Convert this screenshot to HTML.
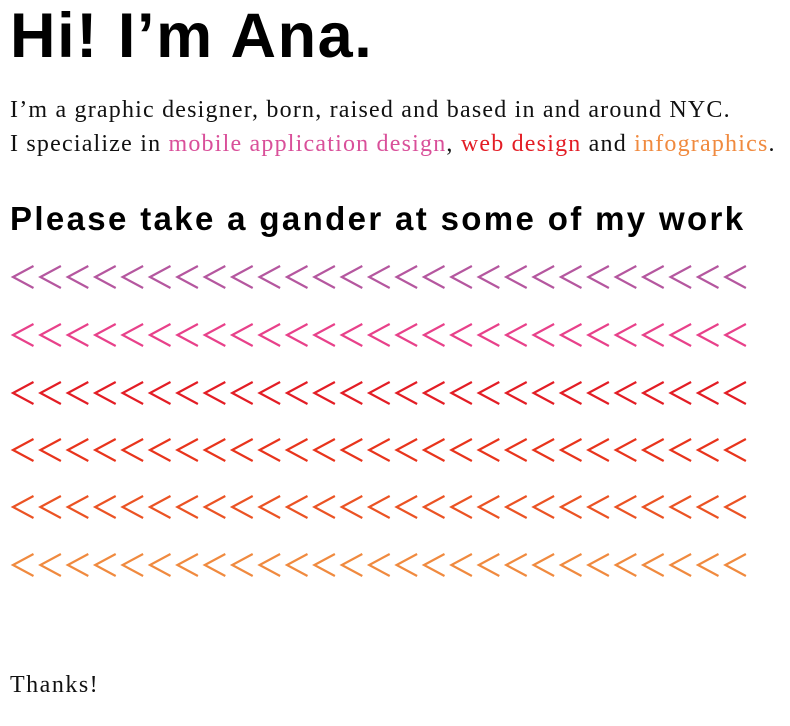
<!DOCTYPE html>
<html><head><meta charset="utf-8"><style>
body{margin:0;width:790px;height:726px;background:#fff;position:relative;overflow:hidden}
.a{position:absolute;left:10px;white-space:nowrap;margin:0}
h1{font:bold 63px/1 "Liberation Sans",sans-serif;top:5px;color:#000;letter-spacing:1.6px}
.p{font:24px/34px "Liberation Serif",serif;color:#111;top:93px;letter-spacing:1.2px}
h2{font:bold 33px/1 "Liberation Sans",sans-serif;top:202px;color:#000;letter-spacing:2.35px}
.t{font:24px/1 "Liberation Serif",serif;top:673px;color:#111;letter-spacing:1.5px}
svg{position:absolute;left:0;top:0}
</style></head><body>
<h1 class="a">Hi! I’m Ana.</h1>
<div class="a p">I’m a graphic designer, born, raised and based in and around NYC.<br>I specialize in <span style="color:#d9509a">mobile application design</span>, <span style="color:#e31d25">web design</span> and <span style="color:#f08a3f">infographics</span>.</div>
<h2 class="a">Please take a gander at some of my work</h2>
<svg width="790" height="726" id="s"></svg>
<div class="a t">Thanks!</div>
<script>
var cols=["#b5579f","#e8418a","#e31d25","#e8341c","#eb5324","#f08a3f"],ys=[277,335,393,450,507,565],h="";
for(var r=0;r<6;r++)for(var i=0;i<27;i++){var x=13+i*27.4;h+='<polyline points="'+(x+20.5)+','+(ys[r]-11)+' '+x+','+ys[r]+' '+(x+20.5)+','+(ys[r]+11)+'" fill="none" stroke="'+cols[r]+'" stroke-width="2.2"/>';}
document.getElementById("s").innerHTML=h;
</script>
</body></html>
